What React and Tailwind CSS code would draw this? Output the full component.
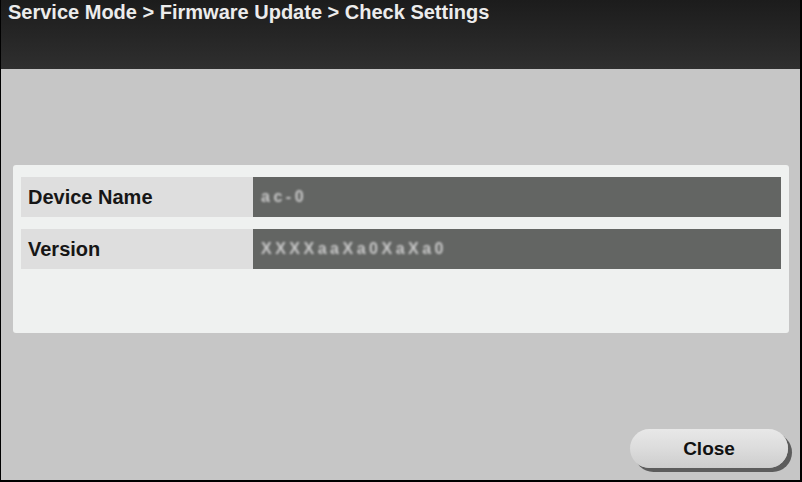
export default function App() {
  const font = { fontFamily: '"Liberation Sans", Arial, sans-serif' };
  return (
    <div
      className="w-[802px] h-[482px] bg-black pl-px pr-[2px] pb-[2px] flex flex-col overflow-hidden"
      style={font}
    >
      <div className="flex-1 flex flex-col bg-[#c6c6c6]">
        {/* Title bar */}
        <div className="h-[69px] bg-gradient-to-b from-[#1c1c1c] to-[#2f2f2f] pl-[7px]">
          <div className="text-[#ececec] font-bold text-[20px] leading-[25px]">
            Service Mode &gt; Firmware Update &gt; Check Settings
          </div>
        </div>

        {/* Settings panel */}
        <div className="mt-[96px] ml-[12px] w-[776px] h-[168px] bg-[#eff1f0] rounded-[3px] px-[8px] pt-[12px] flex flex-col gap-[12px]">
          <Row label="Device Name" value="ac-0" />
          <Row label="Version" value="XXXXaaXa0XaXa0" />
        </div>

        {/* Footer */}
        <div className="flex-1 flex justify-end items-start pt-[96px] pr-[12px]">
          <button className="w-[158px] h-[39px] rounded-full bg-gradient-to-b from-[#e8e8e8] via-[#dcdcdc] to-[#cdcdcd] shadow-[4px_4px_0_#5c5c5c] text-[#111] font-bold text-[19px] leading-none">
            Close
          </button>
        </div>
      </div>
    </div>
  );
}

function Row({ label, value }) {
  return (
    <div className="flex h-[40px]">
      <div className="w-[232px] bg-[#dedede] flex items-center pl-[7px] text-[#161616] font-bold text-[20px]">
        {label}
      </div>
      <div className="flex-1 bg-[#636563] flex items-center pl-[8px]">
        <span className="text-[#c8c8c8] font-bold text-[16px] tracking-[3.5px] blur-[1.3px]">
          {value}
        </span>
      </div>
    </div>
  );
}
